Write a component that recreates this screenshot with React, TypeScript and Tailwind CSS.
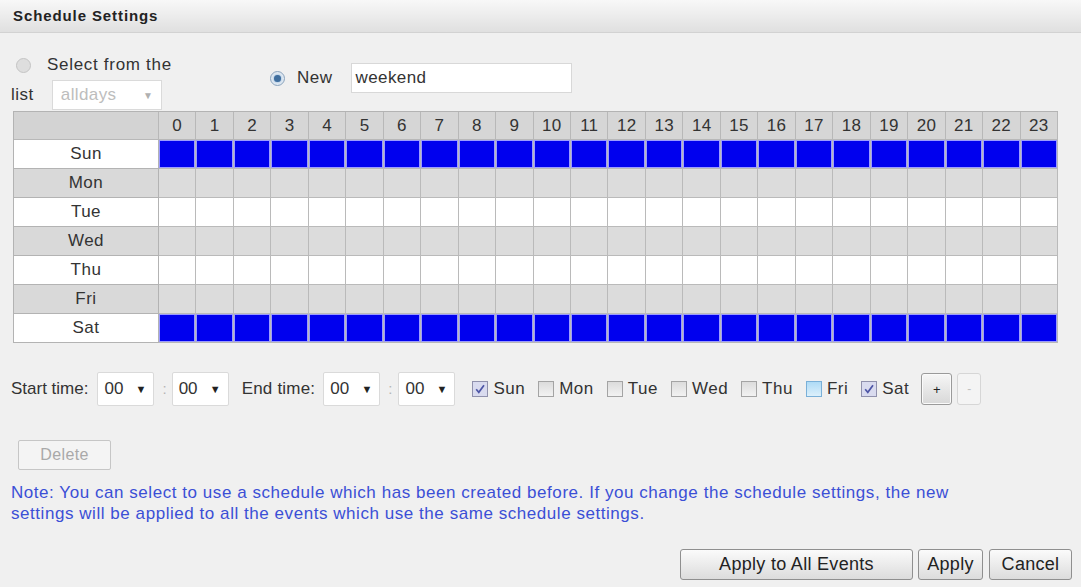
import React from "react";

const HOURS = Array.from({ length: 24 }, (_, i) => i);

type Day = { name: string; band: "white" | "gray"; active: boolean };

const DAYS: Day[] = [
  { name: "Sun", band: "white", active: true },
  { name: "Mon", band: "gray", active: false },
  { name: "Tue", band: "white", active: false },
  { name: "Wed", band: "gray", active: false },
  { name: "Thu", band: "white", active: false },
  { name: "Fri", band: "gray", active: false },
  { name: "Sat", band: "white", active: true },
];

function Radio({ checked }: { checked?: boolean }) {
  return (
    <span
      className={
        "flex h-[15px] w-[15px] shrink-0 items-center justify-center rounded-full border " +
        (checked
          ? "border-[#8aa3bd] bg-[#dfe8f1]"
          : "border-[#c4c4c4] bg-[#dedede]")
      }
    >
      {checked && (
        <span className="h-[7px] w-[7px] rounded-full bg-[#3f6e9e] shadow-[0_0_2px_#6fa0d0]" />
      )}
    </span>
  );
}

function Checkbox({ checked, hover }: { checked?: boolean; hover?: boolean }) {
  let cls = "border-[#a4a4a4] bg-linear-to-b from-[#dcdcdc] to-[#f2f2f2]";
  if (checked) cls = "border-[#9091ad] bg-[#d9dbef]";
  if (hover) cls = "border-[#7ab0d8] bg-linear-to-b from-[#aedbf6] to-[#dcf0fb]";
  return (
    <span
      className={
        "flex h-[16px] w-[16px] shrink-0 items-center justify-center border " + cls
      }
    >
      {checked && (
        <svg viewBox="0 0 12 12" className="h-[12px] w-[12px]">
          <path
            d="M2.2 6.3 L4.8 9.3 L10 2.3"
            fill="none"
            stroke="#4d55a6"
            strokeWidth="1.7"
          />
        </svg>
      )}
    </span>
  );
}

function TimeSelect({ className = "" }: { className?: string }) {
  return (
    <div
      className={
        "flex h-[34px] w-[57px] shrink-0 items-center justify-between rounded-[2px] border border-[#dadada] bg-white pl-[6px] pr-[7px] " +
        className
      }
    >
      <span className="text-[17px] tracking-normal text-[#333]">00</span>
      <span className="text-[11px] text-[#222]">▼</span>
    </div>
  );
}

function Colon({ className = "" }: { className?: string }) {
  return <span className={"text-[15px] text-[#b5b5b5] " + className}>:</span>;
}

function DayCheck({
  label,
  checked,
  hover,
  className = "",
}: {
  label: string;
  checked?: boolean;
  hover?: boolean;
  className?: string;
}) {
  return (
    <label className={"flex items-center " + className}>
      <Checkbox checked={checked} hover={hover} />
      <span className="ml-[5px] text-[17px] tracking-[0.5px] text-[#333]">{label}</span>
    </label>
  );
}

function GrayButton({
  children,
  className = "",
}: {
  children: React.ReactNode;
  className?: string;
}) {
  return (
    <button
      className={
        "flex h-[31px] items-center justify-center rounded-[3px] border border-[#8f8f8f] bg-linear-to-b from-[#fbfbfb] to-[#dcdcdc] text-[18px] tracking-[0.3px] text-[#222] " +
        className
      }
    >
      {children}
    </button>
  );
}

export default function App() {
  return (
    <div className="h-[587px] w-[1081px] overflow-hidden bg-[#f0f0f0] font-['Liberation_Sans',Arial,sans-serif] text-[17px] text-[#333]">
      <header className="flex h-[33px] items-center border-b border-[#d2d2d2] bg-linear-to-b from-[#f8f8f8] to-[#e0e0e0] pl-[13px]">
        <h1 className="text-[15px] font-bold tracking-[0.9px] text-[#222]">Schedule Settings</h1>
      </header>

      {/* select from list / new */}
      <div className="flex h-[78px]">
        <div className="ml-[11px] w-[259px] pt-[22px]">
          <div className="flex h-[20px] items-center">
            <span className="ml-[5px]">
              <Radio />
            </span>
            <span className="ml-[16px] tracking-[0.7px]">Select from the</span>
          </div>
          <div className="mt-[5px] flex h-[30px] items-center">
            <span className="tracking-[0.5px]">list</span>
            <div className="ml-[18px] flex h-[30px] w-[110px] items-center justify-between border border-[#dadada] bg-white pl-[8px] pr-[8px]">
              <span className="tracking-[0.4px] text-[#bdbdbd]">alldays</span>
              <span className="text-[10px] text-[#b0b0b0]">▼</span>
            </div>
          </div>
        </div>
        <div className="flex h-[60px] items-end">
          <div className="flex h-[30px] items-center">
            <Radio checked />
            <span className="ml-[12px] tracking-[0.5px]">New</span>
            <div className="ml-[18px] flex h-[30px] w-[221px] items-center border border-[#d8d8d8] bg-white pl-[4px] tracking-[0.4px]">
              weekend
            </div>
          </div>
        </div>
      </div>

      {/* schedule grid */}
      <div className="ml-[13px] grid w-[1045px] grid-cols-[145px_repeat(24,minmax(0,1fr))] border-l border-t border-[#b3b3b3]">
        <div className="h-[28px] border-b border-r border-[#b8b8b8] bg-[#d3d3d3]" />
        {HOURS.map((h) => (
          <div
            key={h}
            className="flex h-[28px] items-center justify-center border-b border-r border-[#b8b8b8] bg-[#d6d6d6] text-[17px] tracking-[0.3px]"
          >
            {h}
          </div>
        ))}
        {DAYS.map((d) => (
          <React.Fragment key={d.name}>
            <div
              className={
                "flex h-[29px] items-center justify-center border-b border-r border-[#b3b3b3] tracking-[0.5px] " +
                (d.band === "white" ? "bg-white" : "bg-[#d9d9d9]")
              }
            >
              {d.name}
            </div>
            {HOURS.map((h) =>
              d.active ? (
                <div
                  key={h}
                  className="h-[29px] border-b border-r border-[#b8b8b8] bg-[#9c9cff] p-[1px]"
                >
                  <div className="h-full w-full bg-[#0000ee]" />
                </div>
              ) : (
                <div
                  key={h}
                  className={
                    "h-[29px] border-b border-r border-[#bababa] " +
                    (d.band === "white" ? "bg-white" : "bg-[#dcdcdc]")
                  }
                />
              ),
            )}
          </React.Fragment>
        ))}
      </div>

      {/* time range controls */}
      <div className="mt-[29px] flex h-[34px] items-center pl-[11px]">
        <span>Start time:</span>
        <TimeSelect className="ml-[9px]" />
        <Colon className="ml-[8px]" />
        <TimeSelect className="ml-[5px]" />
        <span className="ml-[13px] tracking-[0.2px]">End time:</span>
        <TimeSelect className="ml-[8px]" />
        <Colon className="ml-[8px]" />
        <TimeSelect className="ml-[6px]" />
        <DayCheck label="Sun" checked className="ml-[17px]" />
        <DayCheck label="Mon" className="ml-[13px]" />
        <DayCheck label="Tue" className="ml-[13px]" />
        <DayCheck label="Wed" className="ml-[13px]" />
        <DayCheck label="Thu" className="ml-[13px]" />
        <DayCheck label="Fri" hover className="ml-[13px]" />
        <DayCheck label="Sat" checked className="ml-[13px]" />
        <button className="ml-[12px] flex h-[32px] w-[31px] items-center justify-center rounded-[3px] border border-[#9a9a9a] bg-linear-to-b from-[#f6f6f6] to-[#d8d8d8] text-[13px] leading-none text-[#222] shadow-[inset_0_0_0_1px_#fafafa]">
          +
        </button>
        <button className="ml-[5px] flex h-[32px] w-[24px] items-center justify-center rounded-[3px] border border-[#d6d6d6] bg-[#f4f4f4] text-[12px] leading-none text-[#c0c0c0]">
          -
        </button>
      </div>

      <button className="ml-[18px] mt-[34px] flex h-[30px] w-[93px] items-center justify-center rounded-[2px] border border-[#c6c6c6] bg-[#f4f4f4] text-[16px] tracking-[0.4px] text-[#a9a9a9]">
        Delete
      </button>

      <p className="mt-[12px] pl-[11px] text-[17px] leading-[21px] tracking-[0.55px] text-[#3b4fd6]">
        Note: You can select to use a schedule which has been created before. If you change the schedule settings, the new
        <br />
        settings will be applied to all the events which use the same schedule settings.
      </p>

      <div className="mt-[25px] flex justify-end pr-[9px]">
        <GrayButton className="w-[233px]">Apply to All Events</GrayButton>
        <GrayButton className="ml-[5px] w-[65px]">Apply</GrayButton>
        <GrayButton className="ml-[6px] w-[83px]">Cancel</GrayButton>
      </div>
    </div>
  );
}
